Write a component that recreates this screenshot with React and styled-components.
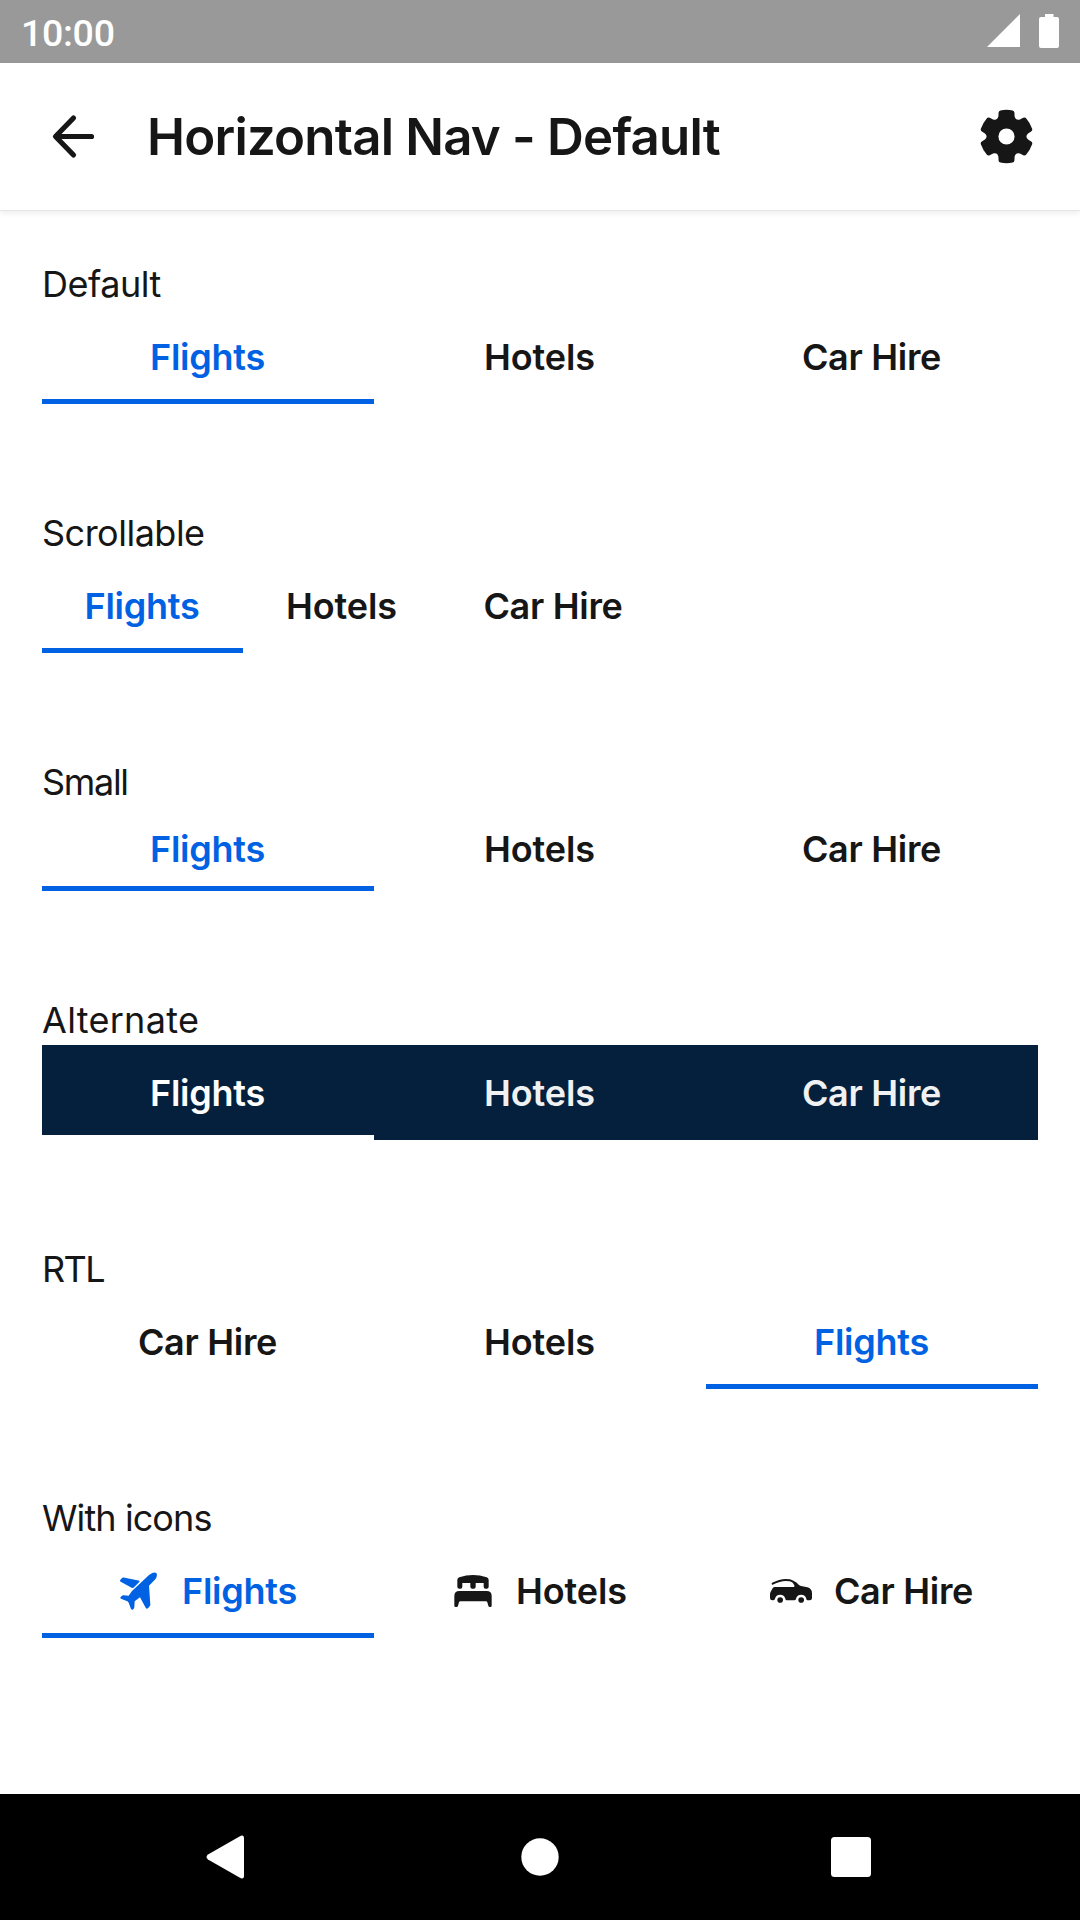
import React from 'react';
import styled, { createGlobalStyle } from 'styled-components';

const GlobalStyle = createGlobalStyle`
  *, *::before, *::after { box-sizing: border-box; }
  body {
    margin: 0;
    background: #fff;
    color: #161616;
    font-family: Inter, "Liberation Sans", sans-serif;
  }
`;

const Screen = styled.div`
  display: flex;
  flex-direction: column;
  width: 1080px;
  height: 1920px;
  overflow: hidden;
  background: #fff;
`;

const StatusBar = styled.div`
  display: flex;
  align-items: center;
  height: 63px;
  padding: 0 21px;
  background: #999;
  color: #fff;
`;

const Clock = styled.span`
  flex: 1;
  padding-top: 2px;
  font: 500 37.5px/44px Roboto, sans-serif;
  letter-spacing: -0.3px;
`;

const StatusIcons = styled.div`
  display: flex;
  gap: 19px;
  padding-bottom: 1px;
`;

const Header = styled.header`
  display: flex;
  align-items: center;
  height: 148px;
  padding: 0 42px;
  border-bottom: 1px solid #e6e6e6;
  box-shadow: 0 2px 6px rgba(0, 0, 0, 0.08);
`;

const IconButton = styled.button`
  display: flex;
  align-items: center;
  justify-content: center;
  width: 63px;
  height: 63px;
  margin: 0;
  padding: 0;
  border: 0;
  background: none;
  color: inherit;
`;

const Title = styled.h1`
  flex: 1;
  margin: 0 0 0 42px;
  font-size: 51px;
  font-weight: 600;
  line-height: 64px;
  letter-spacing: -0.8px;
`;

const Content = styled.main`
  display: flex;
  flex: 1;
  flex-direction: column;
  gap: 104px;
  padding: 48px 42px 0;
`;

const Section = styled.section`
  display: flex;
  flex-direction: column;
`;

const SectionLabel = styled.h2`
  margin: 0;
  font-size: 36px;
  font-weight: 400;
  line-height: 50px;
  letter-spacing: ${(p) => p.$tracking}px;
`;

const Nav = styled.nav`
  display: flex;
  height: ${(p) => (p.$small ? 84 : 95)}px;
  direction: ${(p) => (p.$rtl ? 'rtl' : 'ltr')};
  background: ${(p) => (p.$alternate ? '#05203c' : 'transparent')};
  --tab: ${(p) => (p.$alternate ? '#eff1f2' : '#161616')};
  --tab-selected: ${(p) => (p.$alternate ? '#fff' : '#0062e3')};
  --tab-pad: ${(p) => (p.$small ? 5 : 6)}px;
`;

const Tab = styled.button`
  display: flex;
  flex: ${(p) => (p.$width ? `0 0 ${p.$width}px` : '1 1 0')};
  align-items: center;
  justify-content: center;
  gap: 22px;
  margin: 0;
  padding: var(--tab-pad) 1px 0 0;
  border: 0;
  border-bottom: 5px solid ${(p) => (p.$selected ? 'var(--tab-selected)' : 'transparent')};
  background: none;
  color: ${(p) => (p.$selected ? 'var(--tab-selected)' : 'var(--tab)')};
  font-family: inherit;
  font-size: 36px;
  font-weight: 600;
  line-height: 50px;
  letter-spacing: ${(p) => p.$tracking}px;
  white-space: nowrap;
`;

const SystemBar = styled.footer`
  display: flex;
  align-items: center;
  justify-content: space-between;
  height: 126px;
  padding: 0 198px;
  background: #000;
  color: #fff;
`;

const Svg = styled.svg`
  display: block;
  flex: none;
  fill: currentColor;
`;

const SignalIcon = () => (
  <Svg width="33" height="34" viewBox="0 0 33 34">
    <path d="M33 0V33H0Z" />
  </Svg>
);

const BatteryIcon = () => (
  <Svg width="20" height="34" viewBox="0 0 20 34">
    <path d="M6 0H14.5V3H18Q20 3 20 5V32Q20 34 18 34H2Q0 34 0 32V5Q0 3 2 3H6Z" />
  </Svg>
);

const BackIcon = () => (
  <Svg width="63" height="63" viewBox="0 0 63 63">
    <path
      d="M49.500 31.5H14M31.500 13L13.500 31.5L31.500 50"
      fill="none"
      stroke="currentColor"
      strokeWidth="5.2"
      strokeLinecap="round"
      strokeLinejoin="round"
    />
  </Svg>
);

const gearPath = () => {
  const parts = [];
  for (let k = 0; k < 6; k += 1) {
    const a = (k * Math.PI) / 3;
    const at = (x, y) =>
      `${(x * Math.cos(a) - y * Math.sin(a)).toFixed(2)} ${(x * Math.sin(a) + y * Math.cos(a)).toFixed(2)}`;
    parts.push(
      `${k ? 'L' : 'M'}${at(-24, -60)}L${at(-23.5, -71)}Q${at(-23, -76.5)} ${at(-18, -77.5)}` +
        `Q${at(0, -81)} ${at(18, -77.5)}Q${at(23, -76.5)} ${at(23.5, -71)}L${at(24, -60)}` +
        `Q${at(27, -47)} ${at(39.96, -50.8)}`
    );
  }
  return `${parts.join('')}ZM24 0A24 24 0 1 0 -24 0A24 24 0 1 0 24 0Z`;
};

const GearIcon = () => (
  <Svg width="63" height="63" viewBox="-93.5 -93.5 187 187" fillRule="evenodd">
    <path d={gearPath()} />
  </Svg>
);

const PlaneIcon = () => (
  <Svg width="42" height="42" viewBox="56 60 126 126">
    <path d="M62 91L68 84Q70 82 73 82.5L117 91.5Q123 93 119 97L104 112Q101 115 97 113L64 95Q61 93.5 62 91Z" />
    <path d="M171 69Q175 73 171 83Q169 87 165 91L149 107L153 164Q153 167 151 169L146 175Q142 178 139 173L122 142L106 154L105 172Q105 174 103 176L100 179Q97 180 95 177L88 158Q86 154 82 153L65 146Q61 144 64 141L68 137Q70 135 73 135.5L88 137L98 123L149 75Q164 65 171 69Z" />
  </Svg>
);

const BedIcon = () => (
  <Svg width="42" height="42" viewBox="66 60 126 126">
    <path d="M82 90Q82 84 88 82Q129 68 170 82Q176 84 176 90V110Q176 116 170 116H167Q161 116 161 110V99H137V110Q137 116 131 116H127Q121 116 121 110V99H97V110Q97 116 91 116H88Q82 116 82 110Z" />
    <path d="M73 138Q73 123 88 123H170Q185 123 185 138V167Q185 171 181 171H179Q176 171 175 167L172 157Q171 154 168 154H91Q88 154 87 157L84 167Q83 171 80 171H77Q73 171 73 167Z" />
  </Svg>
);

const CarIcon = () => (
  <Svg width="42" height="42" viewBox="61 60 126 126">
    <path
      d="M69 101Q97 86 120 91Q130 93 146 108"
      fill="none"
      stroke="currentColor"
      strokeWidth="6"
      strokeLinecap="round"
    />
    <path d="M76 111H132Q136 111 134 106L130 100L139 97Q145 105 154 108L173 112Q187 116 187 130V144Q187 151 180 151H174Q170 151 170 146A16 16 0 0 0 139 146Q138 151 134 151H111Q108 151 107 146A16 16 0 0 0 76 146Q75 151 70 151H68Q61 151 61 144V133Q61 129 63 125L69 115Q71 111 76 111Z" />
    <circle cx="91.500" cy="150" r="8.500" />
    <circle cx="154.500" cy="150" r="8.500" />
  </Svg>
);

const SystemBack = () => (
  <Svg width="56" height="56" viewBox="0 0 56 56">
    <path d="M10 25.5L41.5 7.5Q46 5 46 9.5V46.5Q46 51 41.5 48.5L10 30.5Q7 28 10 25.5Z" />
  </Svg>
);

const SystemHome = () => (
  <Svg width="56" height="56" viewBox="0 0 56 56">
    <circle cx="28" cy="28" r="18.7" />
  </Svg>
);

const SystemRecents = () => (
  <Svg width="56" height="56" viewBox="0 0 56 56">
    <rect x="5" y="8" width="40" height="40" rx="3.5" />
  </Svg>
);

const TABS = [
  { name: 'Flights', tracking: -0.27, width: 201, Icon: PlaneIcon },
  { name: 'Hotels', tracking: -0.1, width: 198, Icon: BedIcon },
  { name: 'Car Hire', tracking: -0.3, width: 225, Icon: CarIcon },
];

const SECTIONS = [
  { label: 'Default', tracking: -0.5 },
  { label: 'Scrollable', tracking: -0.5, scrollable: true },
  { label: 'Small', tracking: -1.3, small: true },
  { label: 'Alternate', tracking: 0.3, alternate: true },
  { label: 'RTL', tracking: -1.6, rtl: true },
  { label: 'With icons', tracking: -0.9, icons: true },
];

function HorizontalNav({ small, alternate, rtl, scrollable, icons }) {
  return (
    <Nav $small={small} $alternate={alternate} $rtl={rtl}>
      {TABS.map(({ name, tracking, width, Icon }, i) => (
        <Tab key={name} $selected={i === 0} $tracking={tracking} $width={scrollable ? width : undefined}>
          {icons && <Icon />}
          {name}
        </Tab>
      ))}
    </Nav>
  );
}

export default function App() {
  return (
    <Screen>
      <GlobalStyle />
      <StatusBar>
        <Clock>10:00</Clock>
        <StatusIcons>
          <SignalIcon />
          <BatteryIcon />
        </StatusIcons>
      </StatusBar>
      <Header>
        <IconButton aria-label="Back">
          <BackIcon />
        </IconButton>
        <Title>Horizontal Nav - Default</Title>
        <IconButton aria-label="Settings">
          <GearIcon />
        </IconButton>
      </Header>
      <Content>
        {SECTIONS.map(({ label, tracking, ...variant }) => (
          <Section key={label}>
            <SectionLabel $tracking={tracking}>{label}</SectionLabel>
            <HorizontalNav {...variant} />
          </Section>
        ))}
      </Content>
      <SystemBar>
        <SystemBack />
        <SystemHome />
        <SystemRecents />
      </SystemBar>
    </Screen>
  );
}
